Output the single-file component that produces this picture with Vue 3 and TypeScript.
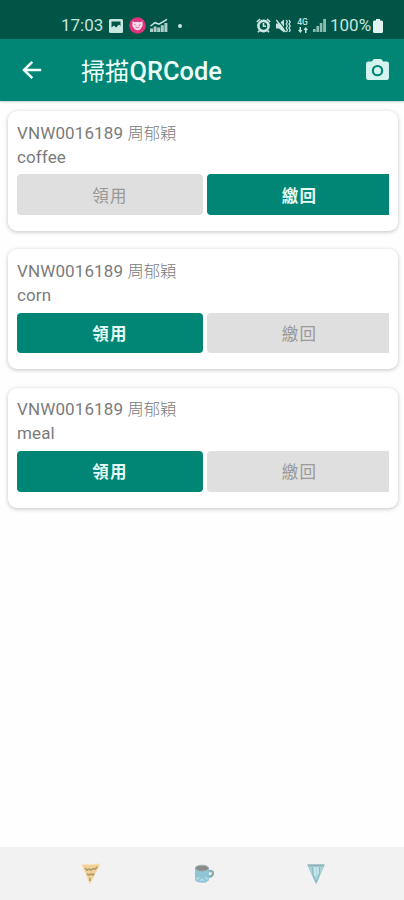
<script setup lang="ts">
import { ref } from 'vue'

interface LoanItem {
  code: string
  person: string
  name: string
  taken: boolean
}

const items = ref<LoanItem[]>([
  { code: 'VNW0016189', person: '周郁穎', name: 'coffee', taken: true },
  { code: 'VNW0016189', person: '周郁穎', name: 'corn', taken: false },
  { code: 'VNW0016189', person: '周郁穎', name: 'meal', taken: false },
])
</script>

<template>
  <div class="screen">
    <div class="status">
      <div class="status-left">
        <span class="clock">17:03</span>
        <svg class="s-image" width="14" height="14" viewBox="0 0 14 14">
          <path fill="#c9e6e0" fill-rule="evenodd" d="M1.500 0h11Q14 0 14 1.500v11q0 1.500-1.500 1.500h-11Q0 14 0 12.500v-11Q0 0 1.500 0zM2.500 2.500v6l2.500-2 2 2L10 5.500l1.500 1.500V2.500z" />
        </svg>
        <svg class="s-app" width="17" height="17" viewBox="0 0 17 17">
          <circle cx="8.500" cy="8.500" r="8.300" fill="#dc347d" />
          <path fill="#fbdcea" d="M3.500 4.300L6 5.200q2.500-.8 5 0l2.500-.9.200 4q-1.700 4.900-5.200 5-3.500-.1-5.200-5z" />
          <path d="M5.300 7.300l2 1.200M11.700 7.300l-2 1.200M6.500 10.200q2 1.300 4 0" stroke="#e4609a" stroke-width="1" fill="none" />
        </svg>
        <svg class="s-chart" width="18" height="15" viewBox="0 0 18 15">
          <path d="M.5 8L5 4.700l4 1.500L17 1.300" stroke="#c9e6e0" stroke-width="1.500" fill="none" />
          <path fill="#a9cfc7" d="M0 10.500h3V14H0zM3.600 8.500h3V14h-3zM7.200 9.500h3V14h-3zM10.800 7.300h3V14h-3zM14.400 5h3v9h-3z" />
        </svg>
        <i class="more"></i>
      </div>
      <div class="status-right">
        <svg width="15" height="15" viewBox="0 0 15 15">
          <circle cx="7.500" cy="8" r="5.100" fill="none" stroke="#c9e6e0" stroke-width="2.600" />
          <path d="M.8 4L4 1M14.200 4L11 1M3.500 12.500L2 14.300M11.500 12.500L13 14.300M7.500 5v3.300h2.500" stroke="#c9e6e0" stroke-width="1.600" fill="none" />
        </svg>
        <svg class="s-mute" width="15" height="14" viewBox="0 0 15 14">
          <path fill="#c9e6e0" d="M0 4.500h3L8 .5v13L3 9.500H0z" />
          <path d="M1.800.5L10.500 12" stroke="#005546" stroke-width="1.200" />
          <path d="M.3 1L9.500 13M10.200 1l1.200 2-1.200 2 1.200 2-1.200 2 1.200 2-1 2M13 1l1.200 2L13 5l1.200 2L13 9l1.200 2-1 2" stroke="#c9e6e0" stroke-width="1.300" fill="none" />
        </svg>
        <div class="network">
          <span>4G</span>
          <svg width="10" height="6" viewBox="0 0 10 6">
            <path fill="#c9e6e0" d="M0 3h1.500V0h1.500v3h1.500L2.300 6zM5.500 3L7.700 0 10 3H8.500v3H7V3z" />
          </svg>
        </div>
        <svg class="s-signal" width="13" height="13" viewBox="0 0 13 13">
          <path fill="#8dbdb2" d="M0 10h2.600v3H0zM3.400 7H6v6H3.400zM6.800 4h2.600v9H6.800zM10.200 0H13v13h-2.800z" />
        </svg>
        <span class="percent">100%</span>
        <svg class="s-battery" width="10" height="14" viewBox="0 0 10 14">
          <path fill="#e1f4f0" d="M3 0h4v1.500h1.500Q10 1.500 10 3v9.500Q10 14 8.500 14h-7Q0 14 0 12.500V3Q0 1.500 1.500 1.500H3z" />
        </svg>
      </div>
    </div>

    <header class="appbar">
      <button class="icon-btn" aria-label="Back">
        <svg width="20" height="20" viewBox="0 0 20 20">
          <path d="M19.200 10H2M10.300 1.800L2 10l8.300 8.200" fill="none" stroke="#f3fffc" stroke-width="2.500" />
        </svg>
      </button>
      <h1>掃描<span>QRCode</span></h1>
      <button class="icon-btn camera" aria-label="Camera">
        <svg width="23" height="21" viewBox="0 0 24 22">
          <path fill="#d5f4ee" fill-rule="evenodd" d="M8.200 0h7.600L18 2.500h3.700Q24 2.500 24 4.800v14.800Q24 22 21.700 22H2.300Q0 22 0 19.600V4.800Q0 2.500 2.300 2.500H6zM12 6.200a6 6 0 1 0 0 12 6 6 0 0 0 0-12z" />
          <circle cx="12" cy="12.200" r="3.700" fill="#d5f4ee" />
        </svg>
      </button>
    </header>

    <main>
      <section v-for="item in items" :key="item.name" class="card">
        <p>{{ item.code }} <span class="person">{{ item.person }}</span></p>
        <p class="item-name">{{ item.name }}</p>
        <div class="actions">
          <button class="take" :disabled="item.taken">領用</button>
          <button class="give" :disabled="!item.taken">繳回</button>
        </div>
      </section>
    </main>

    <nav>
      <button aria-label="Meal">
        <svg width="20" height="22" viewBox="0 0 20 22">
          <path d="M1 1.800Q10 2.300 19 1L9 21z" fill="#f1d096" stroke="#f8dfb4" stroke-width="1" stroke-linejoin="round" />
          <path d="M4 5l2 2 2-1 2 1 2-1.500 2 .7 2.500-2.500M6 11l2 1 2-1 2 1 1-1.500M8 16h2M9 18v-1" fill="none" stroke="#a99872" stroke-width="1.500" />
        </svg>
      </button>
      <button aria-label="Coffee">
        <svg width="20" height="20" viewBox="0 0 20 20">
          <path d="M15 7.300q4-1.200 4 2 0 3-4.500 3.500" fill="none" stroke="#91abb2" stroke-width="2.400" />
          <path d="M1 4Q8 1 15 4v12q-2 3-7 2.800-5 0-7-2.800z" fill="#8fc6d5" />
          <ellipse cx="8" cy="4.200" rx="6.600" ry="3" fill="#8a8b88" stroke="#9eb5b8" stroke-width="1" />
          <path d="M2 14l2 1 1-2M6 17l2-2 2 2M11 13l2 2 1-1" stroke="#b4dbe3" stroke-width="1.500" fill="none" />
        </svg>
      </button>
      <button aria-label="Corn">
        <svg width="18" height="22" viewBox="0 0 18 22">
          <path d="M1 2h16L9 20z" fill="#acd8df" stroke="#b1cdd1" stroke-width="1.500" />
          <path d="M1 2.500h16" stroke="#90b4ba" stroke-width="2" />
          <path d="M5 4l1 7 3 8M12.500 4v7L9.500 19" stroke="#86bfca" stroke-width="1.300" fill="none" />
          <path d="M8 4v9M11 4v7" stroke="#dcecee" stroke-width="1.200" />
        </svg>
      </button>
    </nav>
  </div>
</template>

<style>
body {
  margin: 0;
}
</style>

<style scoped>
.screen {
  height: 900px;
  display: flex;
  flex-direction: column;
  background: #fefefe;
  font-family: Roboto, "Noto Sans CJK TC", sans-serif;
}

button {
  border: 0;
  padding: 0;
  background: none;
  font-family: inherit;
}

svg {
  display: block;
  flex: none;
}

.status {
  box-sizing: border-box;
  height: 39px;
  padding: 12px 21px 0 61px;
  display: flex;
  justify-content: space-between;
  background: #005546;
  color: #c5e4de;
}

.status-left,
.status-right {
  height: 27px;
  display: flex;
  align-items: center;
}

.clock {
  width: 48px;
  font-size: 17px;
  line-height: 27px;
}

.s-app {
  margin-left: 6px;
}

.s-chart {
  margin-left: 4px;
}

.more {
  width: 4px;
  height: 4px;
  margin-left: 10px;
  border-radius: 50%;
  background: #c5e4de;
}

.s-mute {
  margin-left: 5px;
}

.network {
  width: 11px;
  margin-left: 6px;
  display: flex;
  flex-direction: column;
  align-items: center;
  gap: 1px;
}

.network span {
  font-size: 8.500px;
  line-height: 7px;
  font-weight: 500;
}

.s-signal {
  margin-left: 5px;
}

.percent {
  width: 43px;
  margin-left: 4px;
  font-size: 17px;
  line-height: 27px;
}

.appbar {
  box-sizing: border-box;
  height: 62px;
  flex: none;
  padding: 0 15px 0 22px;
  display: flex;
  align-items: center;
  background: #018574;
  box-shadow: 0 1px 2px #00554644;
}

h1 {
  flex: 1;
  margin: 2px 0 0 39px;
  font-size: 24px;
  line-height: 32px;
  font-weight: 400;
  color: #edfffb;
}

h1 span {
  margin-left: 0.500px;
  font-size: 25.400px;
  font-weight: 500;
}

.camera {
  margin-top: -2px;
}

main {
  flex: 1;
  padding: 10px 6px 0 8px;
  display: flex;
  flex-direction: column;
  gap: 18.300px;
}

.card {
  box-sizing: border-box;
  height: 120px;
  padding: 9.700px 9px 0;
  border-radius: 9px;
  background: #fff;
  box-shadow: 0 1px 4px rgba(0, 0, 0, 0.24);
}

p {
  height: 23.900px;
  margin: 0;
  font-size: 17px;
  line-height: 24px;
  font-weight: 400;
  letter-spacing: 0.120px;
  color: #7b7b7b;
}

.person {
  font-size: 16.300px;
  font-weight: 300;
  letter-spacing: 0;
}

.actions {
  margin-top: 6px;
  display: grid;
  grid-template-columns: 186px 1fr;
  gap: 4px;
}

.actions button {
  height: 40.500px;
  border-radius: 4px;
  background: #018574;
  color: #e4fbf6;
  font-size: 16.500px;
  font-weight: 700;
  letter-spacing: 1.200px;
}

.actions .give {
  padding-left: 3px;
  border-radius: 4px 0 0 4px;
}

.actions button:disabled {
  background: #dfdfdf;
  color: #999;
  font-weight: 400;
}

nav {
  box-sizing: border-box;
  height: 53px;
  padding: 0 79px 0 81px;
  display: flex;
  align-items: center;
  justify-content: space-between;
  background: #f2f2f2;
}
</style>
